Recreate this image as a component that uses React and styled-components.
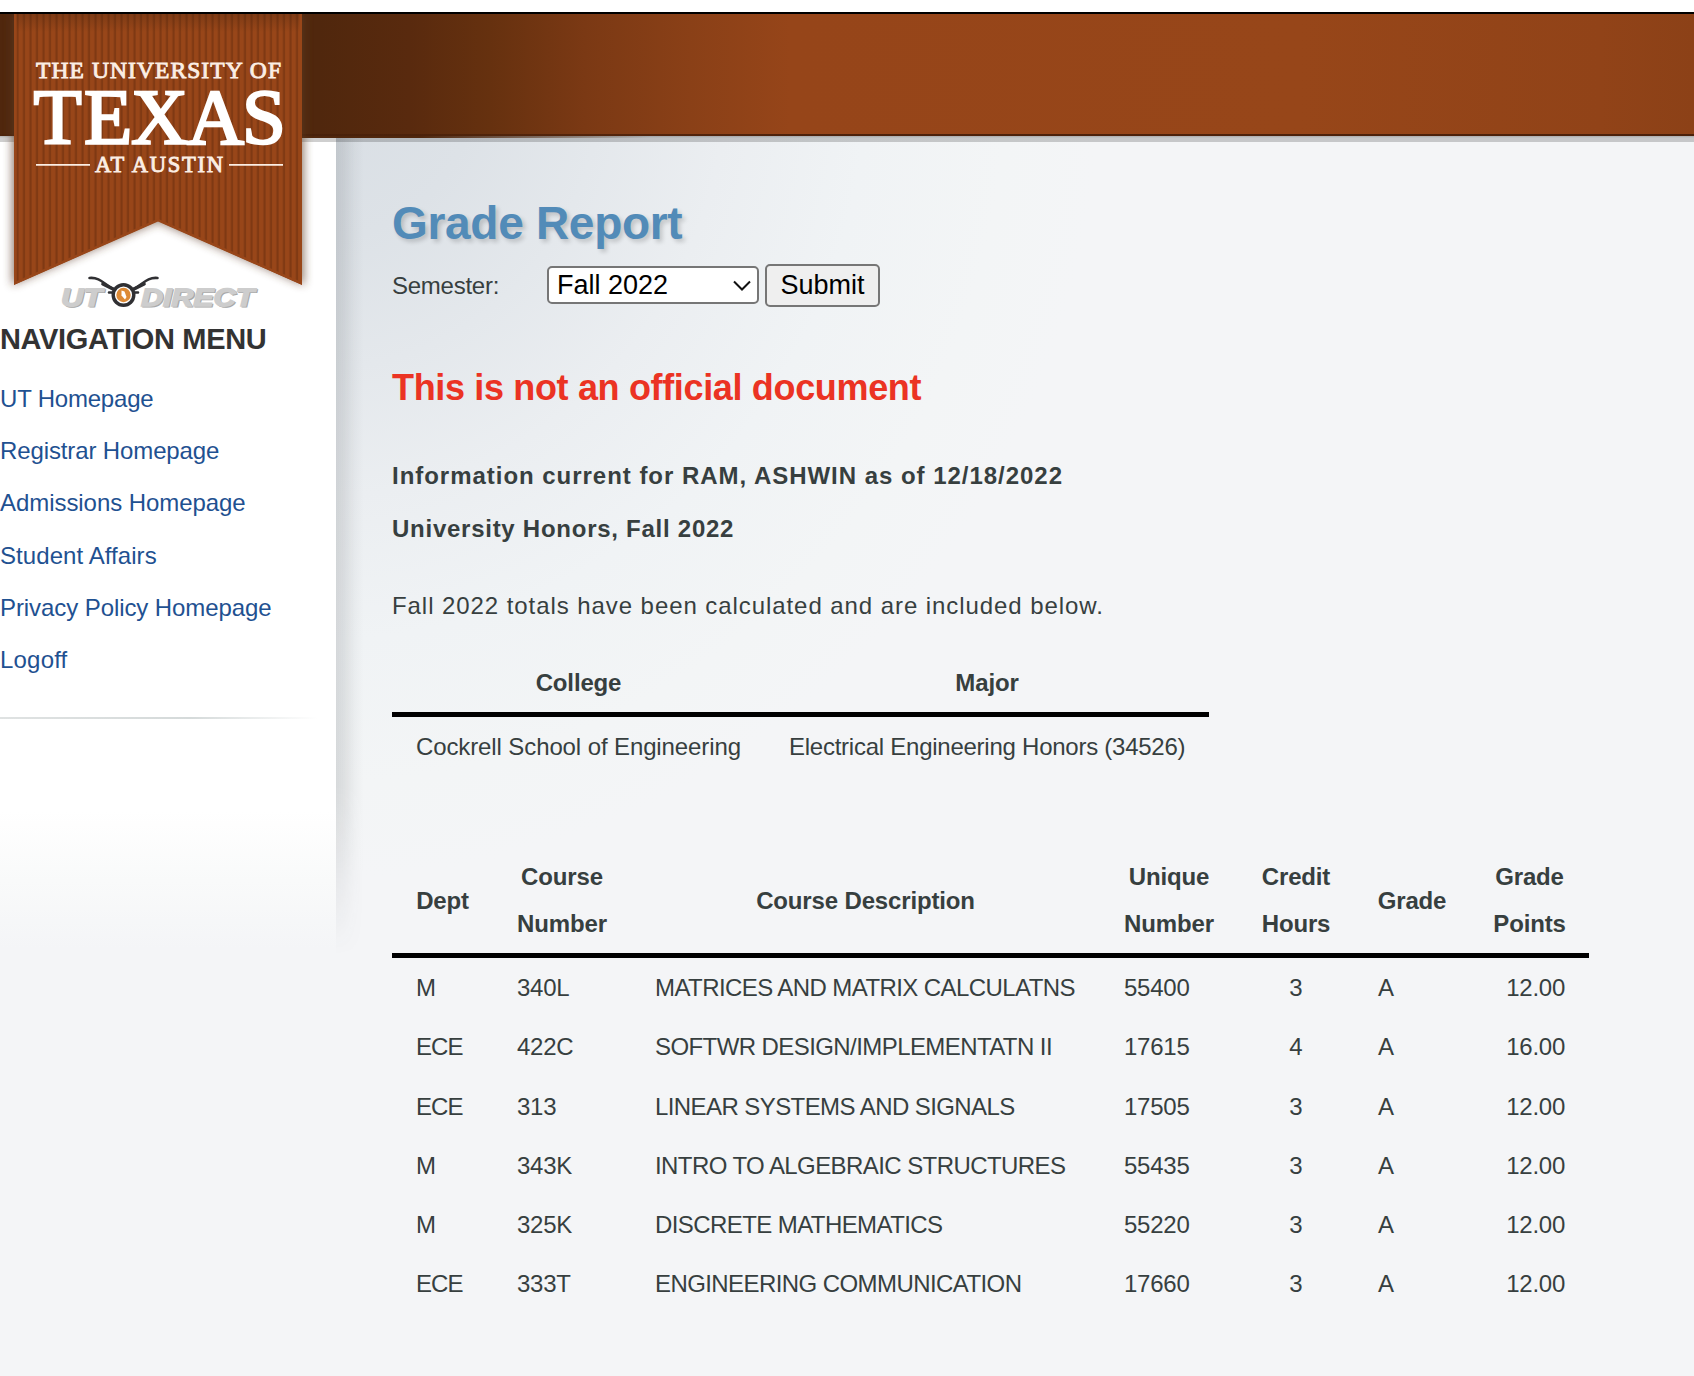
import React from "react";
import styled, { createGlobalStyle } from "styled-components";

const GlobalStyle = createGlobalStyle`
  html, body { margin: 0; padding: 0; }
  body {
    background: #f4f5f7;
    font-family: "Liberation Sans", Arial, sans-serif;
    font-size: 24px;
    color: #373f3f;
    overflow: hidden;
  }
`;

const Page = styled.div`
  position: relative;
  width: 1694px;
  height: 1376px;
  display: flex;
  flex-direction: column;
  overflow: hidden;
`;

const Banner = styled.header`
  box-sizing: border-box;
  flex: none;
  height: 136px;
  border-top: 12px solid #fff;
  background:
    linear-gradient(#000, #000) top / 100% 2px no-repeat,
    linear-gradient(90deg, rgba(64, 27, 8, 0.2) 0, rgba(64, 27, 8, 0.85) 800px) bottom / 100% 2px no-repeat,
    linear-gradient(90deg, #50270d 0, #50270d 320px, #592a0e 410px, #66310f 490px, #7b3914 585px, #8a4017 690px, #964519 790px, #974619 1300px, #914318 1600px, #8c4117 1694px);
`;

const Body = styled.div`
  position: relative;
  flex: 1;
  display: flex;
  background: radial-gradient(ellipse 780px 800px at 320px -56px, #d8dee4 0, #dde2e7 20%, #e4e8ec 36%, #ebeef1 52%, #f0f3f5 70%, #f3f5f6 88%, #f4f5f7 100%);
  &::before {
    content: "";
    position: absolute;
    top: 0;
    left: 0;
    right: 0;
    height: 6px;
    background: linear-gradient(rgba(0, 0, 0, 0.3), rgba(0, 0, 0, 0.19) 2px, rgba(0, 0, 0, 0.19));
  }
  &::after {
    content: "";
    position: absolute;
    top: 0;
    left: 0;
    width: 650px;
    height: 2px;
    background: linear-gradient(90deg, transparent 14px, #50270d 14px, #50270d 420px, rgba(80, 39, 13, 0));
  }
`;

const Sidebar = styled.nav`
  box-sizing: border-box;
  flex: none;
  width: 336px;
  height: 819px;
  padding-top: 184px;
  background: linear-gradient(#fff 0, #fff 675px, #f9fafa 745px, #f4f5f7 812px);
`;

const EdgeShadow = styled.div`
  flex: none;
  width: 28px;
  height: 819px;
  background: linear-gradient(90deg, rgba(50, 54, 58, 0.14), rgba(50, 54, 58, 0.11) 8px, rgba(50, 54, 58, 0.03) 19px, rgba(50, 54, 58, 0));
  mask-image: linear-gradient(#000 650px, transparent);
`;

const MenuTitle = styled.h2`
  margin: 0;
  font-size: 29px;
  line-height: 38px;
  letter-spacing: -0.32px;
  color: #333;
`;

const Links = styled.ul`
  list-style: none;
  margin: 0;
  padding: 15px 0 30.4px;
`;

const LinkItem = styled.li`
  height: 52.2px;
  line-height: 52px;
`;

const MenuLink = styled.a`
  color: #1f5191;
  text-decoration: none;
  letter-spacing: ${(p) => p.$track || 0}px;
`;

const Divider = styled.hr`
  margin: 0;
  border: 0;
  height: 2px;
  width: 318px;
  background: linear-gradient(90deg, #dfe2e2, #d5dada 60%, rgba(225, 228, 228, 0));
`;

const Content = styled.main`
  flex: 1;
  padding: 58px 0 0 28px;
`;

const Title = styled.h1`
  margin: 0;
  font-size: 46px;
  line-height: 58px;
  color: #528bb8;
  letter-spacing: -0.3px;
  text-shadow: 3px 3px 4px rgba(0, 0, 0, 0.17);
`;

const SemesterForm = styled.form`
  display: flex;
  align-items: center;
  height: 44px;
  margin-top: 11px;
`;

const FieldLabel = styled.label`
  width: 155px;
  padding-top: 2px;
  letter-spacing: -0.25px;
`;

const SelectWrap = styled.span`
  position: relative;
  display: flex;
  & > svg {
    position: absolute;
    right: 7px;
    top: 14px;
  }
`;

const Select = styled.select`
  appearance: none;
  box-sizing: border-box;
  width: 212px;
  height: 38px;
  margin: 0;
  padding: 0 8px;
  border: 2px solid #767676;
  border-radius: 5px;
  background: #fff;
  color: #000;
  font: 27px "Liberation Sans", Arial, sans-serif;
`;

const SubmitButton = styled.button`
  box-sizing: border-box;
  width: 115px;
  height: 43px;
  margin: 0 0 0 6px;
  padding: 0;
  border: 2px solid #767676;
  border-radius: 5px;
  background: #efefef;
  color: #000;
  font: 27px "Liberation Sans", Arial, sans-serif;
`;

const Warning = styled.h2`
  margin: 59px 0 0;
  font-size: 36px;
  line-height: 44px;
  letter-spacing: -0.34px;
  color: #eb3323;
`;

const Info = styled.p`
  margin: ${(p) => p.$top}px 0 0;
  font-weight: ${(p) => (p.$bold ? 700 : 400)};
  line-height: 40px;
  letter-spacing: ${(p) => p.$track}px;
`;

const Table = styled.table`
  table-layout: fixed;
  width: ${(p) => p.$width}px;
  margin-top: ${(p) => p.$top}px;
  border-collapse: separate;
  border-spacing: 0;
`;

const Th = styled.th`
  padding: 7.4px 20px 5.4px;
  line-height: 46.7px;
  border-bottom: 5px solid #000;
  white-space: pre-line;
  letter-spacing: -0.15px;
`;

const Td = styled.td`
  padding: 6px 0 6px 24px;
  line-height: 47.2px;
  white-space: nowrap;
  text-align: ${(p) => p.$align || "left"};
  padding-right: ${(p) => (p.$align ? 24 : 0)}px;
  letter-spacing: ${(p) => p.$track || 0}px;
`;

const Ribbon = styled.svg`
  position: absolute;
  left: 0;
  top: 14px;
`;

const HornMark = styled.svg`
  position: absolute;
  left: 56px;
  top: 270px;
`;

const RibbonLogo = () => (
  <Ribbon width="330" height="292" viewBox="0 14 330 292">
    <defs>
      <pattern id="stripes" width="6.5" height="20" patternUnits="userSpaceOnUse" x="14">
        <rect width="6.5" height="20" fill="#984619" />
        <rect x="2.4" width="2.2" height="20" fill="#7f3913" />
      </pattern>
      <filter id="soft" x="-10%" y="-10%" width="120%" height="120%">
        <feGaussianBlur stdDeviation="5" />
      </filter>
      <clipPath id="banner">
        <path d="M14 14H302V285L158 221.5L14 285Z" />
      </clipPath>
      <linearGradient id="top" x1="0" x2="0" y1="0" y2="1">
        <stop offset="0" stopColor="#50270d" stopOpacity=".35" />
        <stop offset="1" stopColor="#50270d" stopOpacity="0" />
      </linearGradient>
    </defs>
    <path d="M12 14H304V285L158 222L12 285Z" fill="#5b3a28" opacity=".65" filter="url(#soft)" />
    <g clipPath="url(#banner)">
      <path d="M14 14H302V285L158 221L14 285Z" fill="url(#stripes)" />
      <path d="M14 14H302V32H14Z" fill="url(#top)" />
      <path d="M14 14V285L158 221.5L302 285V14" fill="none" stroke="#984619" strokeWidth="5" />
    </g>
    <g fill="#fbeee4" fontFamily="Liberation Serif, serif">
      <text x="36" y="78" fontSize="23.5" textLength="245" stroke="#fbeee4" strokeWidth=".9">THE UNIVERSITY OF</text>
      <text x="33.5 84 131 187 242" y="142.5" fontSize="79" fill="#fff" stroke="#fff" strokeWidth="2.4">TEXAS</text>
      <text x="95" y="172" fontSize="22.5" textLength="128" stroke="#fbeee4" strokeWidth=".9">AT AUSTIN</text>
      <path d="M36 164H90V165.8H36ZM229 164H283V165.8H229Z" />
    </g>
  </Ribbon>
);

const UTDirectLogo = () => (
  <HornMark width="210" height="44" viewBox="56 270 210 44">
    <g fontFamily="Liberation Sans, Arial, sans-serif" fontWeight="700" fontStyle="italic" fontSize="25" textRendering="geometricPrecision">
      <g fill="#a9a9a9" stroke="#a9a9a9" strokeWidth="1" transform="translate(1.3 1.3)">
        <text x="61" y="305.5" textLength="41" lengthAdjust="spacingAndGlyphs" aria-hidden="true">UT</text>
        <text x="141" y="305.5" textLength="113" lengthAdjust="spacingAndGlyphs" aria-hidden="true">DIRECT</text>
      </g>
      <g fill="#cdcdcd" stroke="#cdcdcd" strokeWidth="1.4">
        <text x="61" y="305.5" textLength="41" lengthAdjust="spacingAndGlyphs">UT</text>
        <text x="141" y="305.5" textLength="113" lengthAdjust="spacingAndGlyphs">DIRECT</text>
      </g>
    </g>
    <g fill="none" stroke="#303033" strokeLinecap="round">
      <path d="M89.5 278C101 277 104 285 115 290" strokeWidth="2.6" />
      <path d="M157.5 278C146 277 143 285 132 290" strokeWidth="2.6" />
      <path d="M103 284L116 290.5M144 284L131 290.5" strokeWidth="3.6" />
      <path d="M109 292.5H116M138 292.5H131" strokeWidth="2.6" />
    </g>
    <circle cx="123.5" cy="295" r="12" fill="#303033" />
    <circle cx="123.5" cy="295" r="8.6" fill="#fff" />
    <circle cx="123.5" cy="295" r="7.2" fill="#dd8a35" />
    <path d="M121.5 290.5L124.5 291.5L126.5 297L125 299.5L121.5 295.5Z" fill="#fff" />
  </HornMark>
);

const links = [
  { label: "UT Homepage", track: -0.2 },
  { label: "Registrar Homepage", track: -0.12 },
  { label: "Admissions Homepage", track: -0.06 },
  { label: "Student Affairs", track: 0.07 },
  { label: "Privacy Policy Homepage", track: -0.08 },
  { label: "Logoff", track: 0.2 },
];

const columns = [
  { label: "Dept", width: 101, track: -0.9 },
  { label: "Course\nNumber", width: 138, track: -0.25 },
  { label: "Course Description", width: 469, track: -0.58 },
  { label: "Unique\nNumber", width: 138, track: -0.25 },
  { label: "Credit\nHours", width: 116, align: "center" },
  { label: "Grade", width: 116 },
  { label: "Grade\nPoints", width: 119, align: "right", track: -0.25 },
];

const courses = [
  ["M", "340L", "MATRICES AND MATRIX CALCULATNS", "55400", "3", "A", "12.00"],
  ["ECE", "422C", "SOFTWR DESIGN/IMPLEMENTATN II", "17615", "4", "A", "16.00"],
  ["ECE", "313", "LINEAR SYSTEMS AND SIGNALS", "17505", "3", "A", "12.00"],
  ["M", "343K", "INTRO TO ALGEBRAIC STRUCTURES", "55435", "3", "A", "12.00"],
  ["M", "325K", "DISCRETE MATHEMATICS", "55220", "3", "A", "12.00"],
  ["ECE", "333T", "ENGINEERING COMMUNICATION", "17660", "3", "A", "12.00"],
];

export default function App() {
  return (
    <Page>
      <GlobalStyle />
      <Banner />
      <Body>
        <Sidebar>
          <MenuTitle>NAVIGATION MENU</MenuTitle>
          <Links>
            {links.map((l) => (
              <LinkItem key={l.label}>
                <MenuLink href="#" $track={l.track}>{l.label}</MenuLink>
              </LinkItem>
            ))}
          </Links>
          <Divider />
        </Sidebar>
        <EdgeShadow />
        <Content>
          <Title>Grade Report</Title>
          <SemesterForm>
            <FieldLabel htmlFor="semester">Semester:</FieldLabel>
            <SelectWrap>
              <Select id="semester" defaultValue="Fall 2022">
                <option>Fall 2022</option>
              </Select>
              <svg width="20" height="12" viewBox="0 0 20 12" fill="none" stroke="#111" strokeWidth="2">
                <path d="M2 1.5L10 9.5L18 1.5" />
              </svg>
            </SelectWrap>
            <SubmitButton type="button">Submit</SubmitButton>
          </SemesterForm>
          <Warning>This is not an official document</Warning>
          <Info $bold $top={46} $track={0.97}>Information current for RAM, ASHWIN as of 12/18/2022</Info>
          <Info $bold $top={13} $track={0.74}>University Honors, Fall 2022</Info>
          <Info $top={37} $track={0.93}>Fall 2022 totals have been calculated and are included below.</Info>
          <Table $width={817} $top={26.2}>
            <colgroup>
              <col width="373" />
              <col width="444" />
            </colgroup>
            <thead>
              <tr>
                <Th>College</Th>
                <Th>Major</Th>
              </tr>
            </thead>
            <tbody>
              <tr>
                <Td $track={-0.11}>Cockrell School of Engineering</Td>
                <Td $track={-0.25}>Electrical Engineering Honors (34526)</Td>
              </tr>
            </tbody>
          </Table>
          <Table $width={1197} $top={71.2}>
            <colgroup>
              {columns.map((c) => (
                <col key={c.label} width={c.width} />
              ))}
            </colgroup>
            <thead>
              <tr>
                {columns.map((c) => (
                  <Th key={c.label}>{c.label}</Th>
                ))}
              </tr>
            </thead>
            <tbody>
              {courses.map((row) => (
                <tr key={row[3]}>
                  {row.map((cell, i) => (
                    <Td key={i} $align={columns[i].align} $track={columns[i].track}>{cell}</Td>
                  ))}
                </tr>
              ))}
            </tbody>
          </Table>
        </Content>
      </Body>
      <RibbonLogo />
      <UTDirectLogo />
    </Page>
  );
}
